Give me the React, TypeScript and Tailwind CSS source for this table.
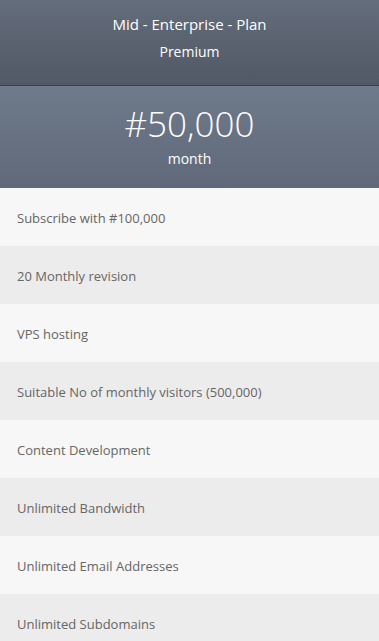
import React from "react";

const features = [
  "Subscribe with #100,000",
  "20 Monthly revision",
  "VPS hosting",
  "Suitable No of monthly visitors (500,000)",
  "Content Development",
  "Unlimited Bandwidth",
  "Unlimited Email Addresses",
  "Unlimited Subdomains",
];

const App = () => {
  return (
    <div className="w-full min-h-screen bg-white font-['Open_Sans',sans-serif]">
      <div className="h-[86px] bg-gradient-to-b from-[#646d7b] to-[#515866] border-b border-[#3b414b] flex flex-col items-center text-white">
        <h2 className="text-[15px] leading-none mt-[17px]">Mid - Enterprise - Plan</h2>
        <p className="text-[14px] leading-none mt-[13px]">Premium</p>
      </div>
      <div className="h-[102px] bg-gradient-to-b from-[#6f7a8b] to-[#5f6979] flex flex-col items-center text-white">
        <p className="text-[35px] font-light leading-none mt-[20px]">#50,000</p>
        <p className="text-[14px] leading-none mt-[11px]">month</p>
      </div>
      <ul>
        {features.map((item, index) => (
          <li
            key={index}
            className={`h-[58px] flex items-center pt-[4px] pl-[17px] text-[13px] text-[#666666] ${
              index % 2 === 0 ? "bg-[#f7f7f7]" : "bg-[#ececec]"
            }`}
          >
            {item}
          </li>
        ))}
      </ul>
    </div>
  );
};

export default App;
